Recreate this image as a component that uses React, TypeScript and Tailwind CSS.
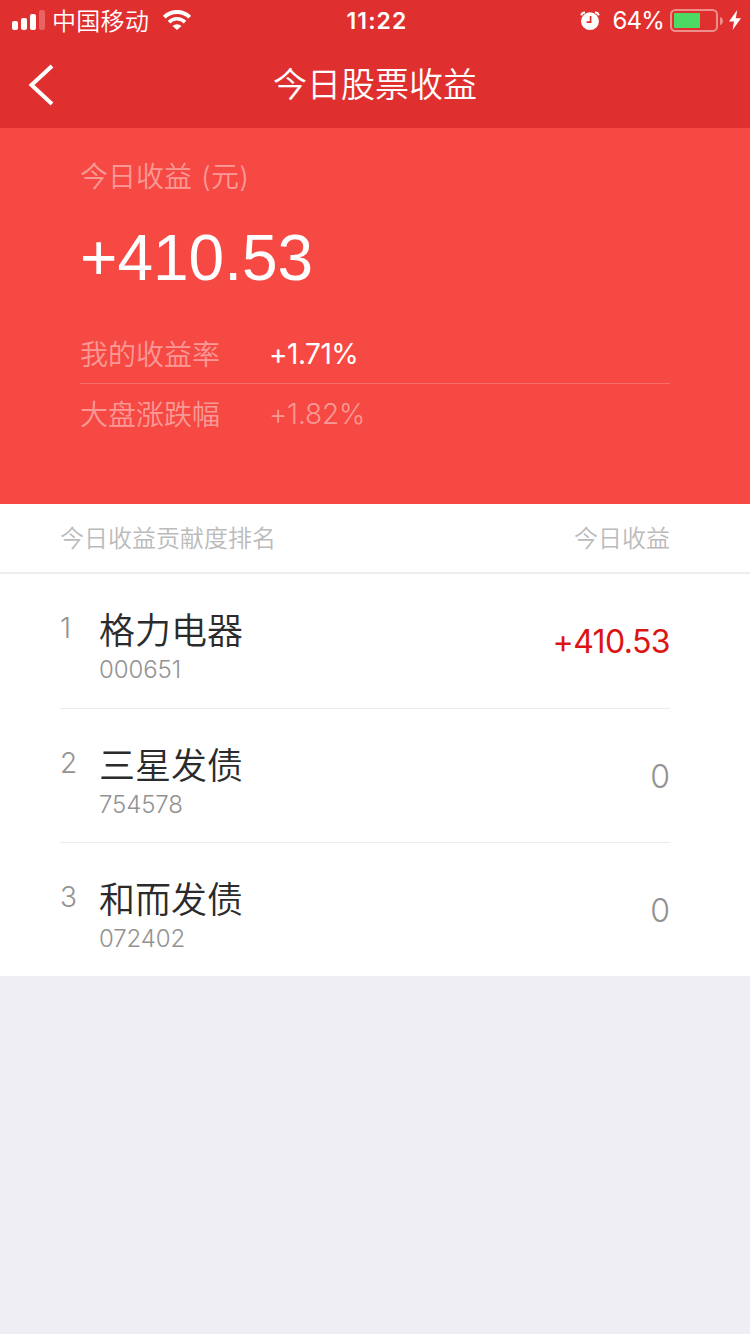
import React from "react";

const stocks = [
  { rank: 1, name: "格力电器", code: "000651", profit: "+410.53" },
  { rank: 2, name: "三星发债", code: "754578", profit: "0" },
  { rank: 3, name: "和而发债", code: "072402", profit: "0" },
];

function StatusBar() {
  return (
    <div className="h-10 grid grid-cols-[1fr_auto_1fr] items-center text-2xl leading-8">
      <div className="flex items-center pl-3">
        {/* Signal */}
        <svg width="33" height="20" viewBox="0 0 33 20" fill="#fff">
          <rect x="0" y="11" width="6" height="9" rx="2" />
          <rect x="9" y="8" width="6" height="12" rx="2" />
          <rect x="18" y="4" width="6" height="16" rx="2" />
          <rect x="27" y="0" width="6" height="20" rx="2" opacity="0.25" />
        </svg>
        <span className="ml-[7px] pt-[3px] font-[350] tracking-[0.3px]">中国移动</span>
        {/* Wifi */}
        <svg className="ml-[14px]" width="28" height="20" viewBox="0 0 28 20">
          <path d="M1.3 7.2A18 18 0 0 1 26.7 7.2" fill="none" stroke="#fff" strokeWidth="4" />
          <path d="M6 12.1A11.4 11.4 0 0 1 22 12.1" fill="none" stroke="#fff" strokeWidth="3.6" />
          <path d="M9.5 16A6.4 6.4 0 0 1 18.5 16L14 20Z" fill="#fff" />
        </svg>
      </div>
      <div className="font-semibold text-[23px] tracking-[1.1px] pl-1 pt-0.5">11:22</div>
      <div className="flex items-center justify-end pr-[9px] pt-0.5">
        {/* Alarm */}
        <svg className="mb-px" width="20" height="20" viewBox="0 0 20 20" fill="none">
          <path d="M1.4 4.4Q1.6 1.6 5 1.4M15 1.4Q18.4 1.6 18.6 4.4" stroke="#fff" strokeWidth="2" />
          <circle cx="10" cy="10.2" r="8.9" fill="#fff" />
          <path d="M10.6 5V11.2H6.6" stroke="#df302f" strokeWidth="1.7" />
        </svg>
        <span className="ml-3 tracking-[-0.8px]">64%</span>
        {/* Battery */}
        <svg className="ml-[6px]" width="54" height="24" viewBox="0 0 54 24">
          <rect x="1" y="1" width="46" height="21" rx="4.5" fill="none" stroke="#fff" strokeOpacity="0.45" strokeWidth="2" />
          <rect x="4" y="4" width="26" height="15" rx="1" fill="#4cd964" />
          <path d="M50 8Q53 9 53 12T50 16Z" fill="#fff" opacity="0.45" />
        </svg>
        <svg className="ml-[5px] mb-0.5" width="12" height="20" viewBox="0 0 12 20">
          <path d="M8.2 0L0 11.5H5L3.6 20L12 8.2H6.8Z" fill="#fff" />
        </svg>
      </div>
    </div>
  );
}

export default function App() {
  return (
    <div className="w-[750px] h-[1334px] bg-[#efeef4] font-['Inter','Noto_Sans_CJK_SC',sans-serif]">
      {/* Header */}
      <div className="h-32 bg-[#df302f] text-white">
        <StatusBar />
        <div className="h-[88px] pt-0.5 grid grid-cols-3 items-center">
          <svg className="ml-7" width="26" height="42" viewBox="0 0 26 42">
            <path d="M24 2L3.5 21L24 40" fill="none" stroke="#fff" strokeWidth="4" />
          </svg>
          <h1 className="text-center text-[34px] leading-[86px] font-[350]">今日股票收益</h1>
        </div>
      </div>

      {/* Summary */}
      <div className="h-[376px] bg-[#f64943] px-20 pt-[29px] text-white">
        <div className="text-[28px] leading-10 font-[350] text-white/45">
          今日收益<span className="ml-[9px] tracking-[0.3px]">(元)</span>
        </div>
        <div className="mt-[23px] text-[64px] leading-[76px] font-['Liberation_Sans',sans-serif]">+410.53</div>
        <div className="mt-[29px] h-[59px] border-b border-white/20 flex text-[28px] leading-[60px] font-[350]">
          <span className="w-[189px] text-white/45">我的收益率</span>
          <span className="leading-[58px] font-normal tracking-[-0.5px]">+1.71%</span>
        </div>
        <div className="flex text-[28px] leading-[62px] font-[350] text-white/45">
          <span className="w-[189px]">大盘涨跌幅</span>
          <span className="leading-[60px] tracking-[-0.2px]">+1.82%</span>
        </div>
      </div>

      {/* Ranking */}
      <div className="bg-white">
        <div className="h-[70px] border-b-2 border-[#ededed] pl-[60px] pr-20 flex justify-between text-2xl leading-[70px] font-[350] text-[#bbb]">
          <span>今日收益贡献度排名</span>
          <span>今日收益</span>
        </div>
        <div className="pl-[60px] pr-20">
          {stocks.map((stock) => (
            <div
              key={stock.rank}
              className="h-[134px] first:h-[135px] last:h-[133px] border-b border-[#ebebeb] last:border-b-0 flex text-[#929292] font-[350]"
            >
              <span className="w-[39px] pt-9 text-[28px] leading-9">{stock.rank}</span>
              <div className="flex-1 pt-8">
                <div className="text-4xl leading-[50px] font-[350] text-[#2b2b2b]">{stock.name}</div>
                <div className="text-2xl leading-7 tracking-[-0.1px]">{stock.code}</div>
              </div>
              <span
                className={`text-[32px] leading-[135px] ${stock.profit === "0" ? "" : "font-normal text-[#dc1414] tracking-[-0.6px]"}`}
              >
                {stock.profit}
              </span>
            </div>
          ))}
        </div>
      </div>
    </div>
  );
}
